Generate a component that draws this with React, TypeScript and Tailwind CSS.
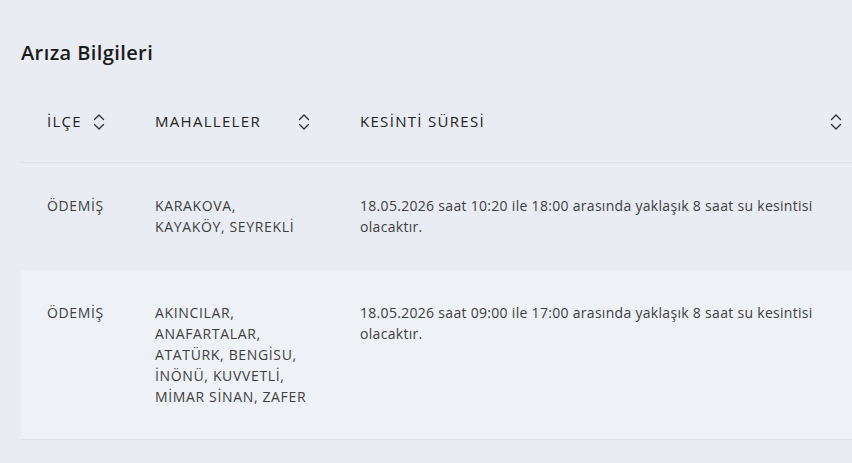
type Row = { ilce: string; mahalleler: string; sure: string };

const rows: Row[] = [
  {
    ilce: "ÖDEMİŞ",
    mahalleler: "KARAKOVA, KAYAKÖY, SEYREKLİ",
    sure: "18.05.2026 saat 10:20 ile 18:00 arasında yaklaşık 8 saat su kesintisi olacaktır.",
  },
  {
    ilce: "ÖDEMİŞ",
    mahalleler: "AKINCILAR, ANAFARTALAR, ATATÜRK, BENGİSU, İNÖNÜ, KUVVETLİ, MİMAR SİNAN, ZAFER",
    sure: "18.05.2026 saat 09:00 ile 17:00 arasında yaklaşık 8 saat su kesintisi olacaktır.",
  },
];

function SortIcon() {
  return (
    <svg viewBox="0 0 12 18" className="h-[18px] w-[12px] text-[#333]" fill="none" stroke="currentColor" strokeWidth={1.4} strokeLinecap="round" strokeLinejoin="round">
      <path d="M1.5 6.5 6 2l4.5 4.5" />
      <path d="M1.5 11.5 6 16l4.5-4.5" />
    </svg>
  );
}

function HeaderCell({ label, className }: { label: string; className: string }) {
  return (
    <div className={`flex items-center justify-between pl-[26px] pr-[24px] ${className}`}>
      <span>{label}</span>
      <SortIcon />
    </div>
  );
}

export default function App() {
  return (
    <div
      className="h-[463px] w-[852px] overflow-hidden bg-[#e9ecf3] text-[#404040]"
      style={{ fontFamily: "'Open Sans', 'Noto Sans', sans-serif" }}
    >
      <h2 className="pl-[21px] pt-[41px] text-[20px] font-semibold leading-[24px] tracking-[0.4px] text-[#1a1a1a]">
        Arıza Bilgileri
      </h2>

      <div className="ml-[21px] mt-[16px] w-[845px]">
        <div className="flex border-b border-[#dde1e8] py-[30px] text-[15px] font-medium leading-[21px] tracking-[1.3px] text-[#222]">
          <HeaderCell label="İLÇE" className="w-[108px]" />
          <HeaderCell label="MAHALLELER" className="w-[205px]" />
          <HeaderCell label="KESİNTİ SÜRESİ" className="flex-1" />
        </div>

        {rows.map((r, i) => (
          <div
            key={i}
            className={`flex border-b py-8 text-[14px] leading-[21px] tracking-[0.3px] ${
              i % 2 === 1 ? "border-[#dde1e8] bg-[#eef1f6]" : "border-transparent"
            }`}
          >
            <div className="w-[108px] pl-[26px] pr-[24px] tracking-[0.65px]">{r.ilce}</div>
            <div className="w-[205px] pl-[26px] pr-[24px]">
              <div className="w-[152px] tracking-[0.65px]">{r.mahalleler}</div>
            </div>
            <div className="flex-1 pl-[26px] pr-[24px]">{r.sure}</div>
          </div>
        ))}
      </div>
    </div>
  );
}
